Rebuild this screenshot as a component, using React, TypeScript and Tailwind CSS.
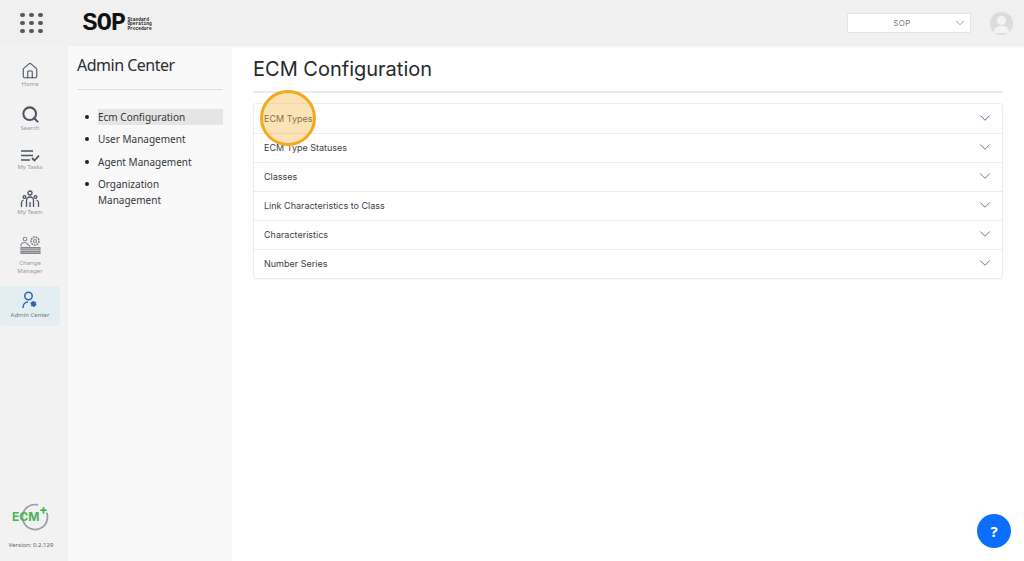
import { ChevronDown, House, Search } from 'lucide-react';

const accordionItems = [
  'ECM Types',
  'ECM Type Statuses',
  'Classes',
  'Link Characteristics to Class',
  'Characteristics',
  'Number Series',
];

function TasksIcon() {
  return (
    <svg width="20" height="14" viewBox="0 0 20 14" fill="none" stroke="#4b5563" strokeWidth="1.6">
      <path d="M1 2h12M1 6.5h12M1 11h9" />
      <path d="M12 9l2.5 2.5L19 6.5" strokeWidth="1.8" />
    </svg>
  );
}

function TeamIcon() {
  return (
    <svg width="20" height="18" viewBox="0 0 20 18" fill="none" stroke="#4b5563" strokeWidth="1.3">
      <circle cx="10" cy="3" r="2" />
      <circle cx="4.5" cy="7" r="1.4" />
      <circle cx="15.5" cy="7" r="1.4" />
      <path d="M6.5 17v-6.5a3.5 3.5 0 0 1 7 0V17M10 12v5M1.5 17v-4.5a3 3 0 0 1 2-2.5M18.5 17v-4.5a3 3 0 0 0-2-2.5" />
    </svg>
  );
}

function ChangeIcon() {
  return (
    <svg width="21" height="18" viewBox="0 0 21 18" fill="none" stroke="#85898d" strokeWidth="1.1">
      <circle cx="5" cy="3" r="1.8" />
      <circle cx="15" cy="5" r="4" strokeDasharray="2 0.7" strokeWidth="1.6" />
      <circle cx="15" cy="5" r="1.5" />
      <path d="M1 10.5V8.5a4 4 0 0 1 7 0L10 10.5" />
      <path d="M1 11.5h19v2.5H1zM1 15.5h19v2H1z" fill="#a9acaf" />
    </svg>
  );
}

function AdminIcon() {
  return (
    <svg width="16" height="18" viewBox="0 0 16 18" fill="none" stroke="#2f62b8" strokeWidth="1.5">
      <circle cx="6.5" cy="5" r="3.7" />
      <path d="M1 17c0-3.5 2-6 5-6" />
      <circle cx="11.5" cy="13" r="2.2" fill="#2f62b8" strokeDasharray="1.5 0.6" strokeWidth="1.6" />
    </svg>
  );
}

function RailItem({
  icon,
  label,
  active,
  className,
  labelClassName,
}: {
  icon: React.ReactNode;
  label: React.ReactNode;
  active?: boolean;
  className?: string;
  labelClassName?: string;
}) {
  return (
    <div className={`flex w-[60px] flex-col items-center rounded-sm ${active ? 'bg-[#e2eef1]' : ''} ${className ?? ''}`}>
      <div className="flex h-[20px] items-end justify-center">{icon}</div>
      <div
        className={`text-center text-[6px] leading-[8px] ${active ? 'text-[#6d7a85]' : 'text-[#94989c]'} ${labelClassName ?? ''}`}
      >
        {label}
      </div>
    </div>
  );
}

function Sidebar() {
  return (
    <div className="flex w-[68px] shrink-0 flex-col items-start bg-[#f2f2f2]">
      <div className="flex flex-1 flex-col pt-[14px]">
        <RailItem icon={<House size={18} color="#4b5563" strokeWidth={1.5} />} label="Home" />
        <RailItem
          className="mt-[16px]"
          icon={<Search size={19} color="#4b5563" strokeWidth={2.6} />}
          label="Search"
        />
        <RailItem className="mt-[11px]" icon={<TasksIcon />} label="My Tasks" />
        <RailItem className="mt-[17px]" icon={<TeamIcon />} label="My Team" />
        <RailItem
          className="mt-[18px]"
          labelClassName="mt-[5px]"
          icon={<ChangeIcon />}
          label={
            <>
              Change
              <br />
              Manager
            </>
          }
        />
        <RailItem
          className="mt-[11px] h-[40px] pt-[3px]"
          labelClassName="mt-[2px]"
          active
          icon={<AdminIcon />}
          label="Admin Center"
        />
      </div>
      <div className="flex w-[62px] flex-col items-center pb-[12px]">
        <div className="relative h-[28px] w-[40px] font-['Inter',sans-serif]">
          <svg width="28" height="28" viewBox="0 0 28 28" fill="none" className="absolute left-[10px] top-0 -rotate-[20deg]">
            <circle cx="14" cy="14" r="12.5" stroke="#9a9c9e" strokeWidth="1.7" strokeDasharray="66 13" />
          </svg>
          <span className="absolute left-[1px] top-[7px] text-[12px] font-bold leading-[14px] text-[#4cb556]">ECM</span>
          <span className="absolute left-[28px] top-[-1px] text-[13px] font-bold leading-[14px] text-[#3fae49]">+</span>
        </div>
        <div className="mt-[10px] whitespace-nowrap text-[6px] leading-[8px] text-[#60656a]">Version: 0.2.129</div>
      </div>
    </div>
  );
}

function AdminMenu() {
  const links = ['Ecm Configuration', 'User Management', 'Agent Management', 'Organization Management'];

  return (
    <div className="w-[164px] shrink-0 bg-[#f9f9fa] pl-[9px] pr-[9px]">
      <h2 className="mt-[8px] text-[16px] font-normal leading-[22px] tracking-[-0.5px] text-[#2b2e31]">Admin Center</h2>
      <div className="mt-[13px] border-t border-[#dcdcdc]" />
      <ul className="mt-[18.5px] flex flex-col gap-[6.5px]">
        {links.map((link, index) => (
          <li key={link} className="flex items-start">
            <span className="ml-[8px] mt-[6px] h-[4px] w-[4px] shrink-0 rounded-full bg-[#222]" />
            <span
              className={`ml-[9px] flex-1 text-[10px] leading-[16px] text-[#33373a] ${index === 0 ? 'bg-[#e5e5e5]' : ''}`}
            >
              {link}
            </span>
          </li>
        ))}
      </ul>
    </div>
  );
}

export default function App() {
  return (
    <div className="relative flex h-[561px] w-[1024px] flex-col overflow-hidden bg-white font-['Noto_Sans',sans-serif]">
      <header className="flex h-[46px] shrink-0 items-center bg-[#f0f0f0] shadow-[0_1px_2px_rgba(0,0,0,0.05)]">
        <div className="ml-[20px] grid grid-cols-3 gap-x-[4.5px] gap-y-[3.5px]">
          {Array.from({ length: 9 }).map((_, i) => (
            <span key={i} className="h-[4.5px] w-[4.5px] rounded-full bg-[#55595c]" />
          ))}
        </div>
        <div className="ml-[40px] flex items-center font-['Liberation_Mono',monospace]">
          <span className="text-[25px] font-bold leading-none tracking-[-0.7px] text-[#111]">SOP</span>
          <span className="ml-[2px] mt-[3px] text-[4.5px] font-bold leading-[4.3px] text-[#222]">
            Standard
            <br />
            Operating
            <br />
            Procedure
          </span>
        </div>
        <div className="ml-auto flex h-[20px] w-[124px] items-center rounded-[1px] border border-[#e3e3e3] bg-white font-['Inter',sans-serif]">
          <span className="ml-[36px] w-[36px] text-center text-[8px] tracking-[0.3px] text-[#777]">SOP</span>
          <ChevronDown size={14} color="#888" strokeWidth={1.4} className="ml-auto mr-[3px]" />
        </div>
        <div className="ml-[19px] mr-[11px] flex h-[23px] w-[23px] flex-col items-center overflow-hidden rounded-full bg-[#dcdcdc]">
          <span className="mt-[4px] h-[9px] w-[9px] rounded-full bg-[#f3f3f3]" />
          <span className="mt-[1px] h-[7px] w-[15px] rounded-t-[6px] bg-[#f3f3f3]" />
        </div>
      </header>

      <div className="flex flex-1">
        <Sidebar />
        <AdminMenu />
        <main className="flex-1 pl-[21px] pr-[21px] font-['Inter',sans-serif]">
          <h1 className="mt-[8px] text-[20px] font-normal leading-[30px] text-[#26292c]">ECM Configuration</h1>
          <div className="mt-[7px] border-t-2 border-[#ececec]" />
          <div className="mt-[10px] rounded-[3px] border border-[#ececec] shadow-[0_1px_2px_rgba(0,0,0,0.04)]">
            {accordionItems.map((item, index) => (
              <div
                key={item}
                className={`flex h-[29px] items-center pl-[10px] pr-[8px] ${index > 0 ? 'border-t border-[#ececec]' : ''}`}
              >
                <span className="-translate-y-[0.5px] text-[9px] text-[#3c4043]">{item}</span>
                <ChevronDown
                  size={18}
                  strokeWidth={1.3}
                  color={index === 0 ? '#4a5fa8' : '#6b7280'}
                  className="ml-auto -translate-y-[1px]"
                />
              </div>
            ))}
          </div>
        </main>
      </div>

      {/* click highlight over the first row */}
      <div className="absolute left-[260px] top-[90px] h-[56px] w-[56px] rounded-full border-[3px] border-[#f5a81c] bg-[#f8b84a]/40" />

      <div className="absolute left-[977px] top-[514px] flex h-[34px] w-[34px] items-center justify-center rounded-full bg-[#0d6efd] text-[15px] font-bold text-white">
        ?
      </div>
    </div>
  );
}
